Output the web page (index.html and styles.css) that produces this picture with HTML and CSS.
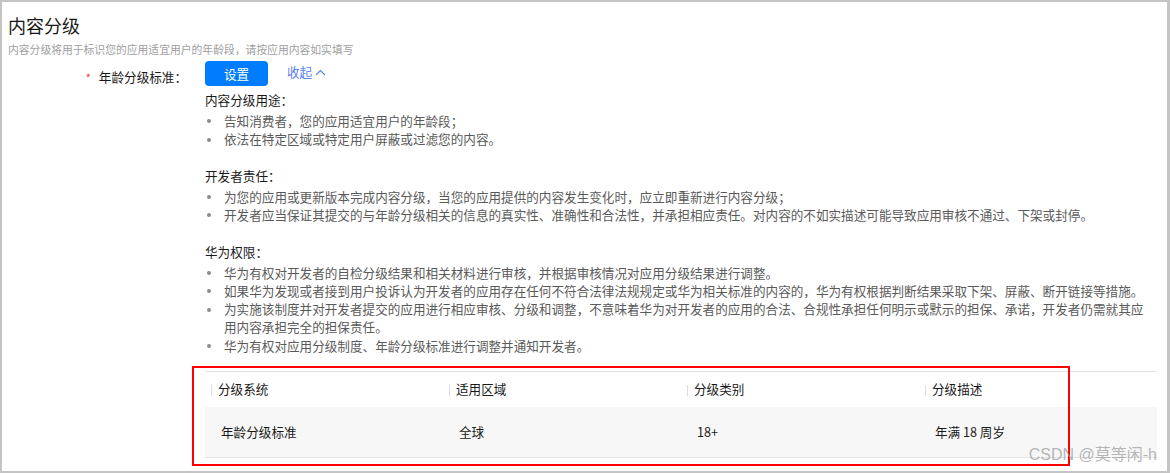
FILE: index.html
```html
<!DOCTYPE html>
<html lang="zh-CN">
<head>
  <meta charset="UTF-8">
  <meta name="viewport" content="width=device-width, initial-scale=1.0">
  <title>内容分级</title>
  <link rel="stylesheet" href="styles.css">
</head>
<body>
  <div class="frame">
    <h1 class="title">内容分级</h1>
    <p class="subtitle">内容分级将用于标识您的应用适宜用户的年龄段，请按应用内容如实填写</p>

    <div class="form-row">
      <div class="form-label"><span class="required">*</span>年龄分级标准：</div>
      <div class="form-body">
        <div class="actions">
          <button class="btn-primary">设置</button>
          <a class="toggle">收起<svg width="11" height="7" viewBox="0 0 11 7"><path d="M1 6 L5.5 1.5 L10 6" fill="none" stroke="currentColor" stroke-width="1.1"/></svg></a>
        </div>

        <div class="notice">
          <div class="notice-group">
            <div class="notice-title">内容分级用途：</div>
            <ul>
              <li>告知消费者，您的应用适宜用户的年龄段；</li>
              <li>依法在特定区域或特定用户屏蔽或过滤您的内容。</li>
            </ul>
          </div>
          <div class="notice-group">
            <div class="notice-title">开发者责任：</div>
            <ul>
              <li>为您的应用或更新版本完成内容分级，当您的应用提供的内容发生变化时，应立即重新进行内容分级；</li>
              <li>开发者应当保证其提交的与年龄分级相关的信息的真实性、准确性和合法性，并承担相应责任。对内容的不如实描述可能导致应用审核不通过、下架或封停。</li>
            </ul>
          </div>
          <div class="notice-group">
            <div class="notice-title">华为权限：</div>
            <ul>
              <li>华为有权对开发者的自检分级结果和相关材料进行审核，并根据审核情况对应用分级结果进行调整。</li>
              <li>如果华为发现或者接到用户投诉认为开发者的应用存在任何不符合法律法规规定或华为相关标准的内容的，华为有权根据判断结果采取下架、屏蔽、断开链接等措施。</li>
              <li>为实施该制度并对开发者提交的应用进行相应审核、分级和调整，不意味着华为对开发者的应用的合法、合规性承担任何明示或默示的担保、承诺，开发者仍需就其应用内容承担完全的担保责任。</li>
              <li>华为有权对应用分级制度、年龄分级标准进行调整并通知开发者。</li>
            </ul>
          </div>
        </div>

        <table class="rating-table">
          <thead>
            <tr>
              <th>分级系统</th>
              <th>适用区域</th>
              <th>分级类别</th>
              <th>分级描述</th>
            </tr>
          </thead>
          <tbody>
            <tr>
              <td>年龄分级标准</td>
              <td>全球</td>
              <td>18+</td>
              <td>年满 18 周岁</td>
            </tr>
          </tbody>
        </table>
      </div>
    </div>

    <div class="highlight"></div>
    <div class="watermark">CSDN @莫等闲-h</div>
  </div>
</body>
</html>
```

FILE: styles.css
```css
body {
  margin: 0;
  padding: 0;
  background: #fff;
  font-family: "Noto Sans CJK SC", "Liberation Sans", sans-serif;
  color: #191919;
}
.frame {
  position: relative;
  box-sizing: border-box;
  width: 1170px;
  height: 473px;
  border: 2px solid #c4c4c4;
  border-right-width: 3px;
  padding: 11px 0 0 6px;
  overflow: hidden;
  background: #fff;
}
.title {
  margin: 0;
  font-size: 18px;
  line-height: 24px;
  font-weight: normal;
  color: #191919;
}
.subtitle {
  margin: 4px 0 0;
  font-size: 10.8px;
  line-height: 16px;
  color: #a0a0a0;
}
.form-row {
  display: flex;
  margin-top: 4px;
  font-size: 12.6px;
  line-height: 18.3px;
}
.form-label {
  width: 179px;
  padding-top: 7px;
  text-align: right;
  color: #191919;
  flex-shrink: 0;
}
.required {
  color: #e84026;
  margin-right: 8px;
  font-size: 11px;
}
.form-body {
  width: 952px;
  margin-left: 18px;
}
.actions {
  display: flex;
  align-items: center;
  height: 25px;
}
.btn-primary {
  width: 63px;
  height: 25px;
  border: none;
  border-radius: 4px;
  background: #007dff;
  color: #fff;
  font-family: inherit;
  font-size: 12.6px;
  padding: 0;
  cursor: pointer;
}
.toggle {
  display: flex;
  align-items: center;
  margin-left: 19px;
  margin-top: -2px;
  color: #5a80f0;
  cursor: pointer;
}
.toggle svg {
  margin-left: 3px;
}
.notice {
  margin-top: 5px;
}
.notice-group {
  margin-bottom: 18.5px;
}
.notice-group:last-child {
  margin-bottom: 0;
}
.notice-title {
  color: #191919;
}
.notice ul {
  list-style: none;
  margin: 2.5px 0 0;
  padding: 0;
  width: 940px;
}
.notice li {
  position: relative;
  padding-left: 19px;
  color: #5a5a5a;
}
.notice li::before {
  content: "";
  position: absolute;
  left: 2px;
  top: 7.5px;
  width: 4px;
  height: 4px;
  border-radius: 50%;
  background: #8c8c8c;
}
.rating-table {
  margin-top: 16px;
  width: 952px;
  border-collapse: collapse;
  table-layout: fixed;
  border-top: 1px solid #e3e3e3;
}
.rating-table th {
  position: relative;
  height: 35px;
  padding: 0 0 0 13px;
  text-align: left;
  font-weight: normal;
  color: #191919;
}
.rating-table th::before {
  content: "";
  position: absolute;
  left: 6px;
  top: 13px;
  width: 1px;
  height: 11px;
  background: #dcdcdc;
}
.rating-table td {
  height: 50px;
  padding: 0 0 0 16px;
  background: #f7f7f7;
  border-bottom: 1px solid #e3e3e3;
  color: #191919;
}
.highlight {
  position: absolute;
  left: 190px;
  top: 364px;
  width: 878px;
  height: 100px;
  box-sizing: border-box;
  border: 2px solid #ff0000;
}
.watermark {
  position: absolute;
  right: 10px;
  bottom: 7px;
  font-family: "Liberation Sans", "Noto Sans CJK SC", sans-serif;
  font-size: 16px;
  line-height: 18px;
  color: rgba(150, 150, 150, 0.7);
}
```
